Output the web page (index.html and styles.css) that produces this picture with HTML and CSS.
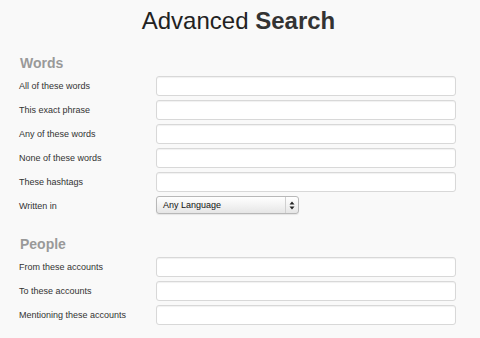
FILE: index.html
```html
<!DOCTYPE html>
<html>
<head>
<meta charset="utf-8">
<link rel="stylesheet" href="styles.css">
</head>
<body>
<div class="page">
  <h1 class="title">Advanced <b>Search</b></h1>
  <section class="group">
    <h2 class="group-title">Words</h2>
    <div class="row"><label class="label">All of these words</label><input class="field" type="text"></div>
    <div class="row"><label class="label">This exact phrase</label><input class="field" type="text"></div>
    <div class="row"><label class="label">Any of these words</label><input class="field" type="text"></div>
    <div class="row"><label class="label">None of these words</label><input class="field" type="text"></div>
    <div class="row"><label class="label">These hashtags</label><input class="field" type="text"></div>
    <div class="row"><label class="label">Written in</label>
      <div class="select">
        <span class="select-text">Any Language</span>
        <span class="select-btn">
          <svg width="6" height="9" viewBox="0 0 6 9"><path d="M3 0.5 L5.5 3.5 H0.5 Z M3 8.5 L5.5 5.5 H0.5 Z" fill="#222"/></svg>
        </span>
      </div>
    </div>
  </section>
  <section class="group group-people">
    <h2 class="group-title">People</h2>
    <div class="row"><label class="label">From these accounts</label><input class="field" type="text"></div>
    <div class="row"><label class="label">To these accounts</label><input class="field" type="text"></div>
    <div class="row"><label class="label">Mentioning these accounts</label><input class="field" type="text"></div>
  </section>
</div>
</body>
</html>
```
FILE: styles.css
```css
html, body {
  margin: 0;
  padding: 0;
  background: #f9f9f9;
  font-family: "Liberation Sans", Arial, sans-serif;
  color: #333;
}
.page {
  padding: 7px 24px 0 19px;
}
.title {
  margin: 0;
  font-size: 24px;
  line-height: 28px;
  font-weight: normal;
  text-align: center;
  color: #222;
  padding-left: 2px;
}
.title b {
  font-weight: bold;
  color: #333;
}
.group {
  margin-top: 20px;
}
.group-people {
  margin-top: 20px;
}
.group-title {
  margin: 0 0 5px 1px;
  font-size: 14px;
  line-height: 16px;
  font-weight: bold;
  color: #999;
}
.row {
  display: flex;
  align-items: center;
  height: 20px;
  margin-bottom: 4px;
}
.label {
  width: 137px;
  flex: none;
  font-size: 9px;
  color: #333;
}
.field {
  box-sizing: border-box;
  width: 300px;
  height: 20px;
  margin: 0;
  border: 1px solid #d8d8d8;
  border-radius: 3px;
  background: #fff;
  box-shadow: inset 0 1px 1px rgba(0,0,0,0.06);
  padding: 0 4px;
  outline: none;
}
.select {
  box-sizing: border-box;
  width: 143px;
  height: 18px;
  align-self: flex-start;
  display: flex;
  border: 1px solid #b8b8b8;
  border-radius: 3px;
  background: linear-gradient(#ffffff, #e6e6e6);
  box-shadow: 0 1px 1px rgba(0,0,0,0.08);
  font-size: 9px;
  color: #111;
}
.select-text {
  flex: 1;
  display: flex;
  align-items: center;
  padding-left: 6px;
}
.select-btn {
  width: 12px;
  border-left: 1px solid #d0d0d0;
  display: flex;
  align-items: center;
  justify-content: center;
}
```
